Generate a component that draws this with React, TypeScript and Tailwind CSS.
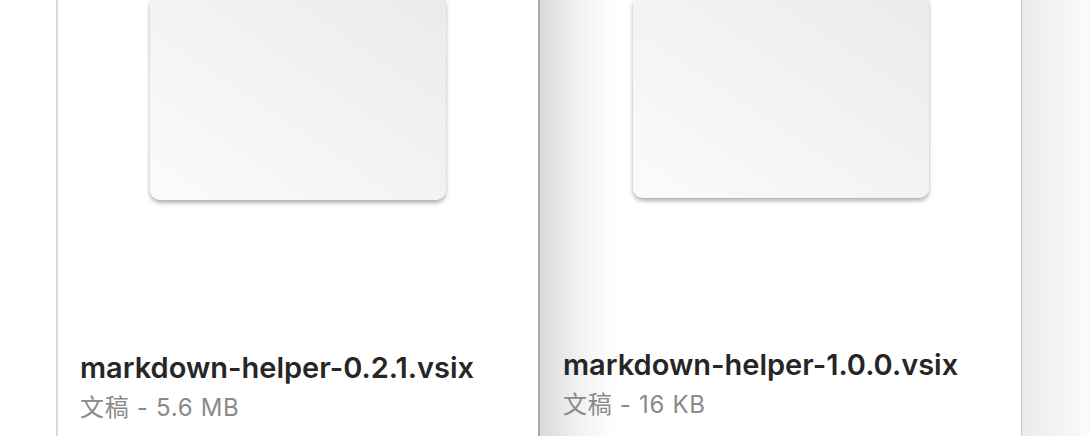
import React from "react";

interface FileItem {
  name: string;
  kind: string;
  size: string;
}

const files: FileItem[] = [
  { name: "markdown-helper-0.2.1.vsix", kind: "文稿", size: "5.6 MB" },
  { name: "markdown-helper-1.0.0.vsix", kind: "文稿", size: "16 KB" },
];

const Thumb: React.FC<{ tall: boolean }> = ({ tall }) => (
  <div className="flex justify-center">
    <div
      className={`w-[296px] ${tall ? "h-[200px]" : "h-[198px]"} rounded-b-[10px] bg-gradient-to-tr from-[#fbfbfb] to-[#ebebeb] shadow-[0_3px_4px_rgba(0,0,0,0.3),0_0_1px_rgba(0,0,0,0.15)]`}
    />
  </div>
);

const FileCard: React.FC<{ file: FileItem; first: boolean }> = ({ file, first }) => (
  <div className="flex flex-col">
    <Thumb tall={first} />
    <div className={`${first ? "mt-[152px] pl-[22px]" : "mt-[151px] pl-[23px]"}`}>
      <div className="text-[29px] leading-[32px] font-semibold text-[#262626]">
        {file.name}
      </div>
      <div className="mt-[10px] text-[24px] leading-[28px] tracking-[0.7px] text-[#8a8a8a]">
        {file.kind} - {file.size}
      </div>
    </div>
  </div>
);

export default function App() {
  return (
    <div className="flex h-[436px] w-[1090px] overflow-hidden bg-white font-['Inter','Noto_Sans_CJK_SC',sans-serif]">
      <div className="w-[56px] shrink-0 bg-white" />
      <div className="w-[482px] shrink-0 border-l-2 border-[#dcd8df] bg-white">
        <FileCard file={files[0]} first />
      </div>
      <div className="w-[484px] shrink-0 border-l-2 border-[#a9a9a9] bg-[linear-gradient(to_right,#dadada_0px,#f0f0f0_35px,#ffffff_75px)] border-r border-r-[#c9c9c9]">
        <FileCard file={files[1]} first={false} />
      </div>
      <div className="flex-1 bg-[linear-gradient(to_right,#ebebeb,#fbfbfb)]" />
    </div>
  );
}
